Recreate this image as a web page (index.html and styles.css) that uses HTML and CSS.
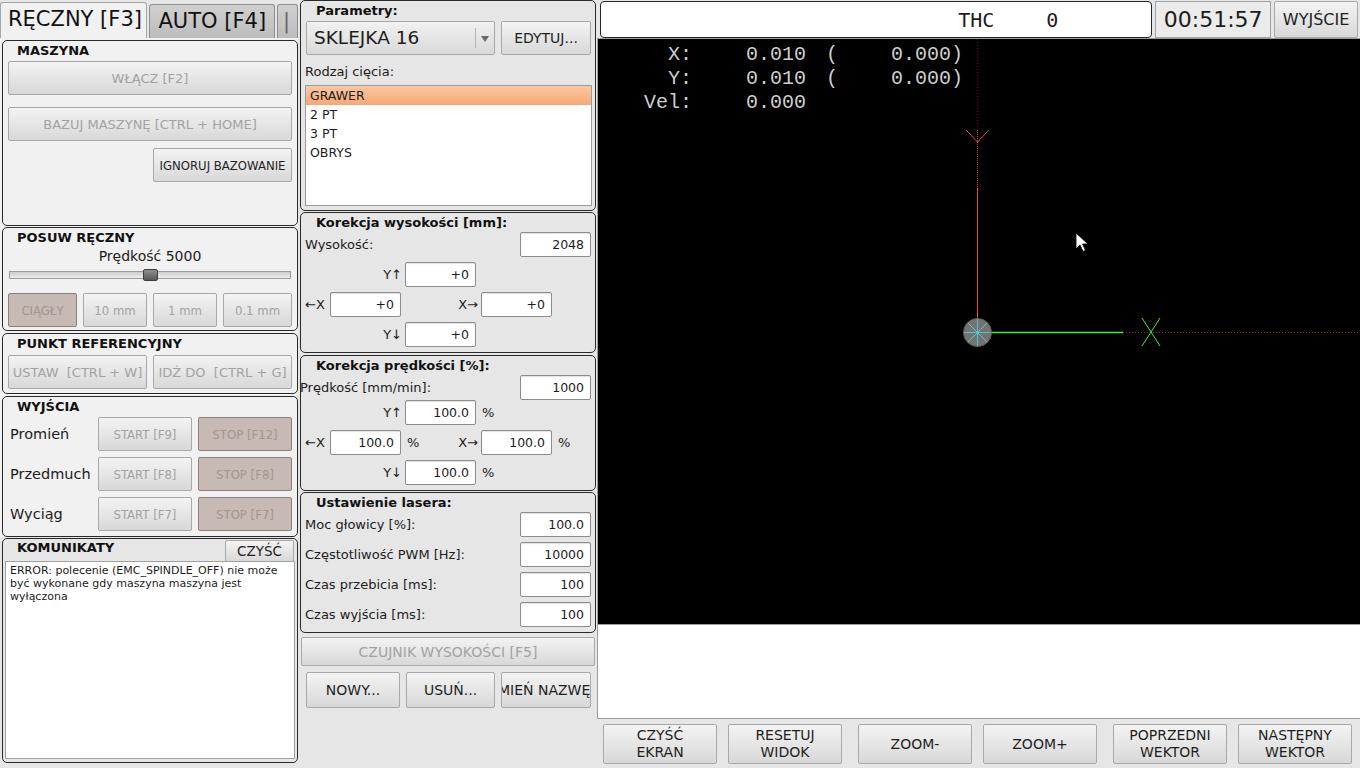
FILE: index.html
```html
<!DOCTYPE html>
<html lang="pl">
<head>
    <meta charset="utf-8">
    <title>Laser - sterowanie</title>
<link rel="stylesheet" href="styles.css">
</head>
<body>
<div class="app">

    <!-- lewa kolumna: zakladki + komunikaty -->
    <div class="col-left">
        <div class="tabs">
            <div class="tab tab-active">RĘCZNY [F3]</div>
            <div class="tab tab-auto">AUTO [F4]</div>
            <div class="tab tab-cut">|</div>
        </div>
        <div class="tab-pane">
            <section class="group g-machine">
                <div class="group-title">MASZYNA</div>
                <div class="btn off">WŁĄCZ [F2]</div>
                <div class="btn off home">BAZUJ MASZYNĘ [CTRL + HOME]</div>
                <div class="btn cond ignore">IGNORUJ BAZOWANIE</div>
            </section>
            <section class="group g-jog">
                <div class="group-title">POSUW RĘCZNY</div>
                <div class="jog-speed">Prędkość 5000</div>
                <div class="slider">
                    <div class="slider-groove"><div class="slider-handle"></div></div>
                </div>
                <div class="jog-steps">
                    <div class="btn off cond checked step-wide">CIĄGŁY</div>
                    <div class="btn off cond step">10 mm</div>
                    <div class="btn off cond step">1 mm</div>
                    <div class="btn off cond step-wide">0.1 mm</div>
                </div>
            </section>
            <section class="group g-ref">
                <div class="group-title">PUNKT REFERENCYJNY</div>
                <div class="ref-row">
                    <div class="btn off half">USTAW  [CTRL + W]</div>
                    <div class="btn off half">IDŹ DO  [CTRL + G]</div>
                </div>
            </section>
            <section class="group g-out">
                <div class="group-title">WYJŚCIA</div>
                <div class="out-row">
                    <span class="out-label">Promień</span>
                    <div class="btn off cond out-btn">START [F9]</div>
                    <div class="btn off cond checked out-btn">STOP [F12]</div>
                </div>
                <div class="out-row">
                    <span class="out-label">Przedmuch</span>
                    <div class="btn off cond out-btn">START [F8]</div>
                    <div class="btn off cond checked out-btn">STOP [F8]</div>
                </div>
                <div class="out-row">
                    <span class="out-label">Wyciąg</span>
                    <div class="btn off cond out-btn">START [F7]</div>
                    <div class="btn off cond checked out-btn">STOP [F7]</div>
                </div>
            </section>
        </div>
        <section class="group g-msg">
            <div class="msg-head">
                <div class="group-title">KOMUNIKATY</div>
                <div class="btn msg-clear">CZYŚĆ</div>
            </div>
            <div class="msg-box">ERROR: polecenie (EMC_SPINDLE_OFF) nie może być wykonane gdy maszyna maszyna jest wyłączona</div>
        </section>
    </div>

    <!-- srodkowa kolumna: parametry ciecia -->
    <div class="col-mid">
        <section class="group g-param">
            <div class="group-title">Parametry:</div>
            <div class="param-row">
                <div class="combo">
                    <span class="combo-text">SKLEJKA 16</span>
                    <span class="combo-arrow"></span>
                </div>
                <div class="btn edit">EDYTUJ...</div>
            </div>
            <div class="cut-label">Rodzaj cięcia:</div>
            <div class="cut-list">
                <div class="cut-item selected">GRAWER</div>
                <div class="cut-item">2 PT</div>
                <div class="cut-item">3 PT</div>
                <div class="cut-item">OBRYS</div>
            </div>
        </section>

        <section class="group g-form">
            <div class="group-title">Korekcja wysokości [mm]:</div>
            <div class="kv"><span>Wysokość:</span><div class="field">2048</div></div>
            <div class="cross gap">
                <span class="ax ax-r">Y↑</span><div class="field">+0</div>
            </div>
            <div class="cross cross-mid gap">
                <span class="ax">←X</span><div class="field">+0</div><span class="pct"></span>
                <span class="ax ax-r">X→</span><div class="field">+0</div>
            </div>
            <div class="cross gap">
                <span class="ax ax-r">Y↓</span><div class="field">+0</div>
            </div>
        </section>

        <section class="group g-form g-speed">
            <div class="group-title">Korekcja prędkości [%]:</div>
            <div class="kv"><span class="shift">Prędkość [mm/min]:</span><div class="field">1000</div></div>
            <div class="cross">
                <span class="ax ax-r">Y↑</span><div class="field">100.0</div><span class="pct">%</span>
            </div>
            <div class="cross cross-mid gap">
                <span class="ax">←X</span><div class="field">100.0</div><span class="pct">%</span>
                <span class="ax ax-r">X→</span><div class="field">100.0</div><span class="pct">%</span>
            </div>
            <div class="cross gap">
                <span class="ax ax-r">Y↓</span><div class="field">100.0</div><span class="pct">%</span>
            </div>
        </section>

        <section class="group g-form g-laser">
            <div class="group-title">Ustawienie lasera:</div>
            <div class="kv"><span>Moc głowicy [%]:</span><div class="field">100.0</div></div>
            <div class="kv gap"><span>Częstotliwość PWM [Hz]:</span><div class="field">10000</div></div>
            <div class="kv gap"><span>Czas przebicia [ms]:</span><div class="field">100</div></div>
            <div class="kv gap"><span>Czas wyjścia [ms]:</span><div class="field">100</div></div>
        </section>

        <div class="btn off sensor">CZUJNIK WYSOKOŚCI [F5]</div>
        <div class="file-row">
            <div class="btn file-btn">NOWY...</div>
            <div class="btn file-btn narrow">USUŃ...</div>
            <div class="btn file-btn">ZMIEŃ NAZWĘ...</div>
        </div>
    </div>

    <!-- prawa kolumna: podglad -->
    <div class="col-right">
        <div class="top-bar">
            <div class="status"><span>THC</span><span class="thc-val">0</span></div>
            <div class="clock">00:51:57</div>
            <div class="btn quit">WYJŚCIE</div>
        </div>
        <div class="view-frame">
            <div class="canvas">
                <div class="dro">
                    <span class="dro-l">X:</span><span class="dro-v">0.010</span><span class="dro-r"><span>(</span><span>0.000)</span></span>
                    <span class="dro-l">Y:</span><span class="dro-v">0.010</span><span class="dro-r"><span>(</span><span>0.000)</span></span>
                    <span class="dro-l">Vel:</span><span class="dro-v">0.000</span><span class="dro-r"></span>
                </div>
                <svg class="plot" width="762" height="586" viewBox="0 0 762 586">
                    <path d="M379.5 0 V91" stroke="#5c1717" stroke-dasharray="1 2" fill="none"/>
                    <path d="M379.5 91 V149" stroke="#d83a3a" stroke-dasharray="1 1" fill="none"/>
                    <path d="M379.5 149 V279" stroke="#e24a4a" fill="none"/>
                    <path d="M368 91 L379.5 103 L391 91" stroke="#e24a4a" fill="none"/>
                    <path d="M525 293.5 H762" stroke="#a82626" stroke-dasharray="1 2" fill="none"/>
                    <path d="M393 293.5 H525" stroke="#3ef03e" stroke-width="1.6" fill="none"/>
                    <path d="M544 279 L562 307 M562 279 L544 307" stroke="#3ef03e" fill="none"/>
                    <circle cx="379.5" cy="293.5" r="14" fill="#737373" stroke="#5e5e5e"/>
                    <path d="M366 293.5 H393 M379.5 280 V307 M370 284 L389 303 M389 284 L370 303" stroke="#58c4c4" fill="none"/>
                    <path d="M478 194 V210 L482 206 L485 212.5 L487.5 211.3 L484.6 205 H490 Z" fill="#fff" stroke="#000" stroke-width="0.8"/>
                </svg>
            </div>
            <div class="view-info"></div>
        </div>
        <div class="view-buttons">
            <div class="pair">
                <div class="btn view-btn">CZYŚĆ<br>EKRAN</div>
                <div class="btn view-btn">RESETUJ<br>WIDOK</div>
            </div>
            <div class="pair">
                <div class="btn view-btn">ZOOM-</div>
                <div class="btn view-btn">ZOOM+</div>
            </div>
            <div class="pair">
                <div class="btn view-btn">POPRZEDNI<br>WEKTOR</div>
                <div class="btn view-btn">NASTĘPNY<br>WEKTOR</div>
            </div>
        </div>
    </div>

</div>
</body>
</html>
```

FILE: styles.css
```css
* {
  box-sizing: border-box;
}

html, body {
  margin: 0;
}

body {
  width: 1360px;
  height: 768px;
  overflow: hidden;
  background: #e6e6e6;
  font-family: "DejaVu Sans", "Noto Sans", sans-serif;
  font-size: 13px;
  color: #1c1c1c;
}

.app {
  display: flex;
  height: 768px;
}

/* ---------- wspolne ---------- */

.group {
  border: 1px solid #2a2a2a;
  border-radius: 5px;
}

.group-title {
  height: 20px;
  line-height: 20px;
  padding-left: 14px;
  font-weight: bold;
  font-size: 13px;
  color: #111;
}

.btn {
  display: flex;
  align-items: center;
  justify-content: center;
  height: 34px;
  background: linear-gradient(#f3f3f3, #d8d8d8);
  border: 1px solid #a8a8a8;
  border-radius: 2px;
  white-space: pre;
  overflow: hidden;
  color: #1e1e1e;
}

.btn.off {
  color: #a2a2a2;
}

.btn.checked {
  background: #c7b9b3;
  border-color: #8b827f;
  color: #a19690;
}

.cond {
  font-family: "DejaVu Sans Condensed", "DejaVu Sans", sans-serif;
  font-stretch: condensed;
}

/* ---------- lewa kolumna ---------- */

.col-left {
  width: 298px;
  display: flex;
  flex-direction: column;
}

.tabs {
  height: 38px;
  display: flex;
  align-items: flex-end;
}

.tab {
  height: 34px;
  margin-left: 2px;
  padding-left: 8px;
  font-size: 21px;
  line-height: 32px;
  background: linear-gradient(#d0d0d0, #bcbcbc);
  border: 1px solid #8e8e8e;
  border-bottom: none;
  border-radius: 3px 3px 0 0;
  color: #111;
  white-space: nowrap;
  overflow: hidden;
}

.tab-active {
  width: 148px;
  height: 36px;
  margin-left: 0;
  padding-left: 7px;
  background: #f1f1f1;
  border-color: #a4a4a4;
}

.tab-auto {
  width: 126px;
}

.tab-cut {
  width: 21px;
  padding-left: 5px;
  color: #666;
}

.tab-pane {
  height: 499px;
  background: #f1f1f1;
  padding: 2px 0 0 2px;
  display: flex;
  flex-direction: column;
}

.tab-pane .group {
  width: 296px;
  padding: 0 5px;
  display: flex;
  flex-direction: column;
}

.tab-pane .group-title {
  padding-left: 9px;
}

.g-machine {
  height: 186px;
  margin-bottom: 1px;
}

.g-machine .home {
  margin-top: 12px;
}

.g-machine .ignore {
  align-self: flex-end;
  width: 139px;
  margin-top: 7px;
}

.g-jog {
  height: 104px;
  margin-bottom: 2px;
}

.jog-speed {
  height: 16px;
  line-height: 16px;
  text-align: center;
  font-size: 14px;
}

.slider {
  height: 24px;
  padding: 7px 1px 0 1px;
}

.slider-groove {
  position: relative;
  height: 8px;
  border: 1px solid #9c9c9c;
  background: linear-gradient(#cdcdcd, #ededed);
}

.slider-handle {
  position: absolute;
  left: 133px;
  top: -3px;
  width: 15px;
  height: 12px;
  border: 1px solid #3e3e3e;
  border-radius: 2px;
  background: linear-gradient(#8e8e8e, #575757);
}

.jog-steps {
  display: flex;
  gap: 6px;
  margin-top: 5px;
}

.step-wide {
  width: 69px;
}

.step {
  width: 64px;
}

.g-ref {
  height: 61px;
  margin-bottom: 2px;
}

.ref-row {
  display: flex;
  gap: 6px;
  margin-top: 1px;
}

.half {
  width: 139px;
}

.g-out {
  height: 141px;
}

.out-row {
  display: flex;
  align-items: center;
  gap: 6px;
  margin-bottom: 6px;
}

.out-label {
  width: 84px;
  padding-left: 2px;
  font-size: 14.5px;
}

.out-btn {
  width: 94px;
}

.g-msg {
  height: 225px;
  width: 296px;
  margin: 1px 0 0 2px;
  padding: 0 2px 3px 2px;
  display: flex;
  flex-direction: column;
}

.msg-head {
  display: flex;
  justify-content: space-between;
  height: 22px;
}

.msg-head .group-title {
  height: 18px;
  line-height: 18px;
  padding-left: 12px;
}

.msg-clear {
  width: 69px;
  height: 22px;
  margin: 1px 1px 0 0;
  font-size: 13.5px;
}

.msg-box {
  flex: 1;
  background: #fff;
  border: 1px solid #a0a0a0;
  padding: 2px 4px;
  font-size: 11px;
  line-height: 13px;
}

/* ---------- srodkowa kolumna ---------- */

.col-mid {
  width: 299px;
  padding-left: 2px;
  display: flex;
  flex-direction: column;
}

.col-mid .group {
  width: 296px;
}

.g-param {
  height: 211px;
  padding: 0 4px 4px 4px;
}

.g-param .group-title {
  height: 20px;
  line-height: 20px;
  padding-left: 11px;
}

.param-row {
  display: flex;
  gap: 6px;
  padding-left: 1px;
}

.combo {
  display: flex;
  width: 189px;
  height: 34px;
  background: linear-gradient(#f1f1f1, #d9d9d9);
  border: 1px solid #a8a8a8;
  border-radius: 2px;
}

.combo-text {
  flex: 1;
  padding-left: 7px;
  line-height: 32px;
  font-size: 18.5px;
}

.combo-arrow {
  position: relative;
  width: 19px;
  margin: 6px 0;
  border-left: 1px solid #b4b4b4;
}

.combo-arrow::after {
  content: "";
  position: absolute;
  left: 5px;
  top: 8px;
  border-left: 4px solid transparent;
  border-right: 4px solid transparent;
  border-top: 6px solid #6a6a6a;
}

.edit {
  width: 90px;
  font-size: 14px;
}

.cut-label {
  height: 20px;
  line-height: 20px;
  margin-top: 7px;
}

.cut-list {
  height: 121px;
  margin-top: 3px;
  width: 287px;
  background: #fff;
  border: 1px solid #9a9a9a;
}

.cut-item {
  height: 19px;
  line-height: 19px;
  padding-left: 4px;
  font-size: 12.5px;
}

.cut-item.selected {
  background: linear-gradient(#fcc8a3, #f5a877);
}

.g-form {
  height: 141px;
  margin-top: 1px;
  padding: 0 4px 4px 4px;
}

.g-form .group-title {
  height: 19px;
  line-height: 19px;
  padding-left: 11px;
}

.g-speed {
  height: 136px;
  margin-top: 2px;
}

.g-laser {
  margin-top: 1px;
}

.kv {
  display: flex;
  justify-content: space-between;
  align-items: center;
  height: 25px;
}

.gap {
  margin-top: 5px;
}

.shift {
  margin-left: -5px;
}

.field {
  width: 71px;
  height: 25px;
  background: #fff;
  border: 1px solid #8c8c8c;
  border-radius: 2px;
  box-shadow: inset 0 1px 1px rgba(0, 0, 0, 0.12);
  text-align: right;
  padding-right: 6px;
  line-height: 23px;
  font-size: 12.5px;
}

.cross {
  display: flex;
  align-items: center;
  height: 25px;
  padding-left: 75px;
}

.cross > * {
  flex-shrink: 0;
}

.cross-mid {
  padding-left: 0;
}

.ax {
  width: 22px;
  margin-right: 3px;
}

.ax-r {
  text-align: right;
}

.pct {
  width: 55px;
  padding-left: 6px;
}

.pct:last-child {
  width: auto;
}

.sensor {
  width: 294px;
  height: 29px;
  margin: 4px 0 0 1px;
  font-size: 14px;
}

.file-row {
  display: flex;
  gap: 6px;
  margin-top: 6px;
  padding-left: 6px;
}

.file-btn {
  width: 94px;
  height: 36px;
  font-size: 14px;
}

.file-btn.narrow {
  width: 89px;
}

.file-btn:last-child {
  width: 90px;
}

/* ---------- prawa kolumna ---------- */

.col-right {
  width: 763px;
  display: flex;
  flex-direction: column;
}

.top-bar {
  height: 38px;
  display: flex;
  gap: 3px;
  padding: 1px 2px 0 3px;
}

.status {
  width: 553px;
  height: 37px;
  background: #fff;
  border: 1px solid #262626;
  border-radius: 4px;
  display: flex;
  justify-content: flex-end;
  align-items: center;
  padding-right: 93px;
  font-family: "DejaVu Sans Mono", monospace;
  font-size: 20px;
}

.thc-val {
  margin-left: 52px;
}

.clock {
  width: 116px;
  height: 37px;
  background: #ebebeb;
  border: 1px solid #a2a2a2;
  text-align: center;
  line-height: 35px;
  font-size: 22px;
}

.quit {
  width: 84px;
  height: 37px;
  font-size: 16px;
}

.view-frame {
  height: 681px;
  border: 1px solid #9c9c9c;
  border-right: none;
  display: flex;
  flex-direction: column;
}

.canvas {
  position: relative;
  height: 586px;
  background: #000;
  border-bottom: 1px solid #9c9c9c;
}

.plot {
  position: absolute;
  left: 0;
  top: 0;
}

.dro {
  position: absolute;
  left: 0;
  top: 4px;
  display: grid;
  grid-template-columns: 94px 134px 137px;
  grid-auto-rows: 24px;
  line-height: 24px;
  font-family: "Liberation Mono", monospace;
  font-size: 20px;
  color: #cfcfcf;
  white-space: pre;
}

.dro-l {
  text-align: right;
}

.dro-v {
  padding-left: 54px;
}

.dro-r {
  display: flex;
  justify-content: space-between;
}

.view-info {
  flex: 1;
  background: #fff;
}

.view-buttons {
  display: flex;
  gap: 16px;
  margin-top: 5px;
  padding-left: 6px;
}

.pair {
  display: flex;
  gap: 11px;
}

.view-btn {
  width: 114px;
  height: 40px;
  text-align: center;
  font-size: 14px;
  line-height: 17px;
}
```
